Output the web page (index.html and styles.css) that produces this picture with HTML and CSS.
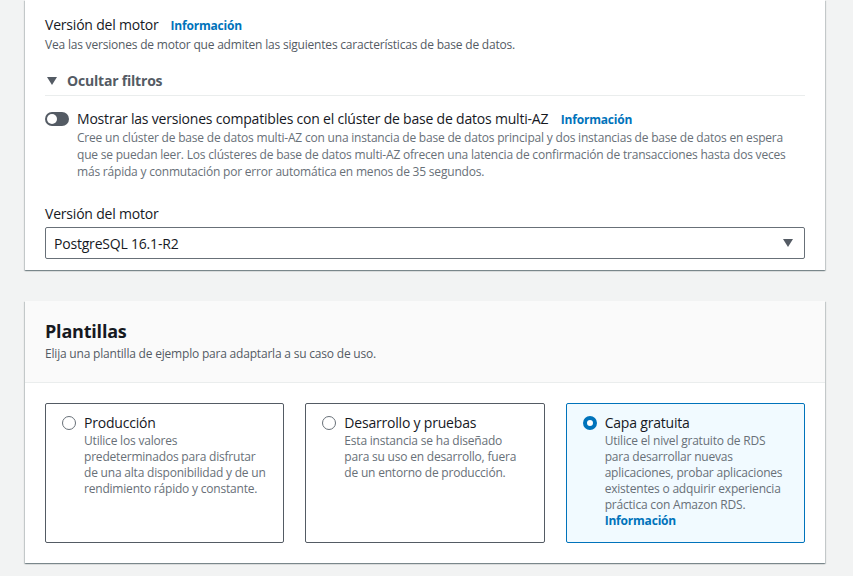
FILE: index.html
```html
<!DOCTYPE html>
<html lang="es">
<head>
<meta charset="utf-8">
<link rel="stylesheet" href="styles.css">
</head>
<body>
<div class="page">
  <section class="panel panel-engine">
    <div class="field-head">
      <span class="label">Versión del motor</span>
      <a class="info">Información</a>
    </div>
    <p class="desc">Vea las versiones de motor que admiten las siguientes características de base de datos.</p>
    <div class="expander">
      <svg class="caret-down" width="10" height="8" viewBox="0 0 10 8"><path d="M0 0h10L5 8z" fill="#545b64"/></svg>
      <span>Ocultar filtros</span>
    </div>
    <div class="toggle-row">
      <span class="toggle"><span class="knob"></span></span>
      <div class="toggle-text">
        <div class="toggle-label">Mostrar las versiones compatibles con el clúster de base de datos multi-AZ <a class="info">Información</a></div>
        <p class="toggle-desc">Cree un clúster de base de datos multi-AZ con una instancia de base de datos principal y dos instancias de base de datos en espera que se puedan leer. Los clústeres de base de datos multi-AZ ofrecen una latencia de confirmación de transacciones hasta dos veces más rápida y conmutación por error automática en menos de 35 segundos.</p>
      </div>
    </div>
    <div class="select-label">Versión del motor</div>
    <div class="select">
      <span>PostgreSQL 16.1-R2</span>
      <svg width="10" height="8" viewBox="0 0 10 8"><path d="M0 0h10L5 8z" fill="#545b64"/></svg>
    </div>
  </section>

  <section class="panel panel-templates">
    <header class="panel-header">
      <h2>Plantillas</h2>
      <p>Elija una plantilla de ejemplo para adaptarla a su caso de uso.</p>
    </header>
    <div class="cards">
      <div class="card">
        <span class="radio"></span>
        <div class="card-body">
          <div class="card-title">Producción</div>
          <p class="card-desc">Utilice los valores predeterminados para disfrutar de una alta disponibilidad y de un rendimiento rápido y constante.</p>
        </div>
      </div>
      <div class="card">
        <span class="radio"></span>
        <div class="card-body">
          <div class="card-title">Desarrollo y pruebas</div>
          <p class="card-desc">Esta instancia se ha diseñado para su uso en desarrollo, fuera de un entorno de producción.</p>
        </div>
      </div>
      <div class="card selected">
        <span class="radio checked"></span>
        <div class="card-body">
          <div class="card-title">Capa gratuita</div>
          <p class="card-desc">Utilice el nivel gratuito de RDS para desarrollar nuevas aplicaciones, probar aplicaciones existentes o adquirir experiencia práctica con Amazon RDS.<br><a class="info">Información</a></p>
        </div>
      </div>
    </div>
  </section>
</div>
</body>
</html>
```

FILE: styles.css
```css
* { box-sizing: border-box; }
html, body { margin: 0; padding: 0; }
body {
  background: #f2f3f3;
  font-family: "Open Sans", "Noto Sans", sans-serif;
  letter-spacing: -0.2px;
  color: #16191f;
  width: 853px;
  height: 576px;
  overflow: hidden;
}
p { margin: 0; }
.page {
  padding: 0 28px 0 25px;
  display: flex;
  flex-direction: column;
  gap: 31px;
}
.panel {
  background: #fff;
  box-shadow: 0 1px 1px 0 rgba(0,28,36,.3), 1px 1px 1px 0 rgba(0,28,36,.15), -1px 1px 1px 0 rgba(0,28,36,.15);
}
.panel-engine {
  padding: 15px 20px 11px 20px;
}
.field-head {
  display: flex;
  align-items: baseline;
  gap: 12px;
  line-height: 20px;
}
.label { font-size: 14px; }
.info {
  color: #0073bb;
  font-weight: 700;
  font-size: 12px;
}
.desc {
  font-size: 12px;
  color: #545b64;
  line-height: 18px;
}
.expander {
  margin-top: 17px;
  display: flex;
  align-items: center;
  gap: 10px;
  font-size: 14px;
  font-weight: 700;
  color: #545b64;
  padding: 0 0 4px 2px;
  border-bottom: 1px solid #eaeded;
  line-height: 20px;
}
.toggle-row {
  margin-top: 14px;
  display: flex;
  gap: 8px;
}
.toggle {
  flex: none;
  width: 24px;
  height: 14px;
  border-radius: 7px;
  background: #545b64;
  margin-top: 2px;
  position: relative;
}
.knob {
  position: absolute;
  left: 2px;
  top: 2px;
  width: 10px;
  height: 10px;
  border-radius: 50%;
  background: #fff;
}
.toggle-label {
  font-size: 14px;
  line-height: 18px;
}
.toggle-label .info { margin-left: 9px; }
.toggle-desc {
  font-size: 12px;
  color: #687078;
  line-height: 17px;
}
.select-label {
  margin-top: 24px;
  font-size: 14px;
  line-height: 20px;
}
.select {
  margin-top: 3px;
  height: 32px;
  border: 1px solid #687078;
  border-radius: 2px;
  display: flex;
  align-items: center;
  justify-content: space-between;
  padding: 0 11px 0 8px;
  font-size: 14px;
}
.panel-header {
  background: #fafafa;
  border-bottom: 1px solid #eaeded;
  padding: 18px 20px 19px;
}
.panel-header h2 {
  margin: 0;
  font-size: 18px;
  font-weight: 700;
  line-height: 24px;
}
.panel-header p {
  font-size: 12px;
  color: #545b64;
  line-height: 18px;
  margin-top: 2px;
}
.cards {
  padding: 20px 20px 20px;
  display: grid;
  grid-template-columns: repeat(3, 1fr);
  gap: 21px;
}
.card {
  border: 1px solid #545b64;
  border-radius: 2px;
  height: 140px;
  display: flex;
  gap: 8px;
  padding: 9px 16px 0 16px;
}
.card.selected {
  border-color: #0073bb;
  background: #f1faff;
}
.radio {
  flex: none;
  width: 14px;
  height: 14px;
  border-radius: 50%;
  border: 1.5px solid #687078;
  margin-top: 3px;
  background: #fff;
}
.radio.checked {
  border: 4px solid #0073bb;
}
.card-title {
  font-size: 14px;
  line-height: 20px;
}
.card-desc {
  font-size: 12px;
  color: #687078;
  line-height: 16px;
}
```
